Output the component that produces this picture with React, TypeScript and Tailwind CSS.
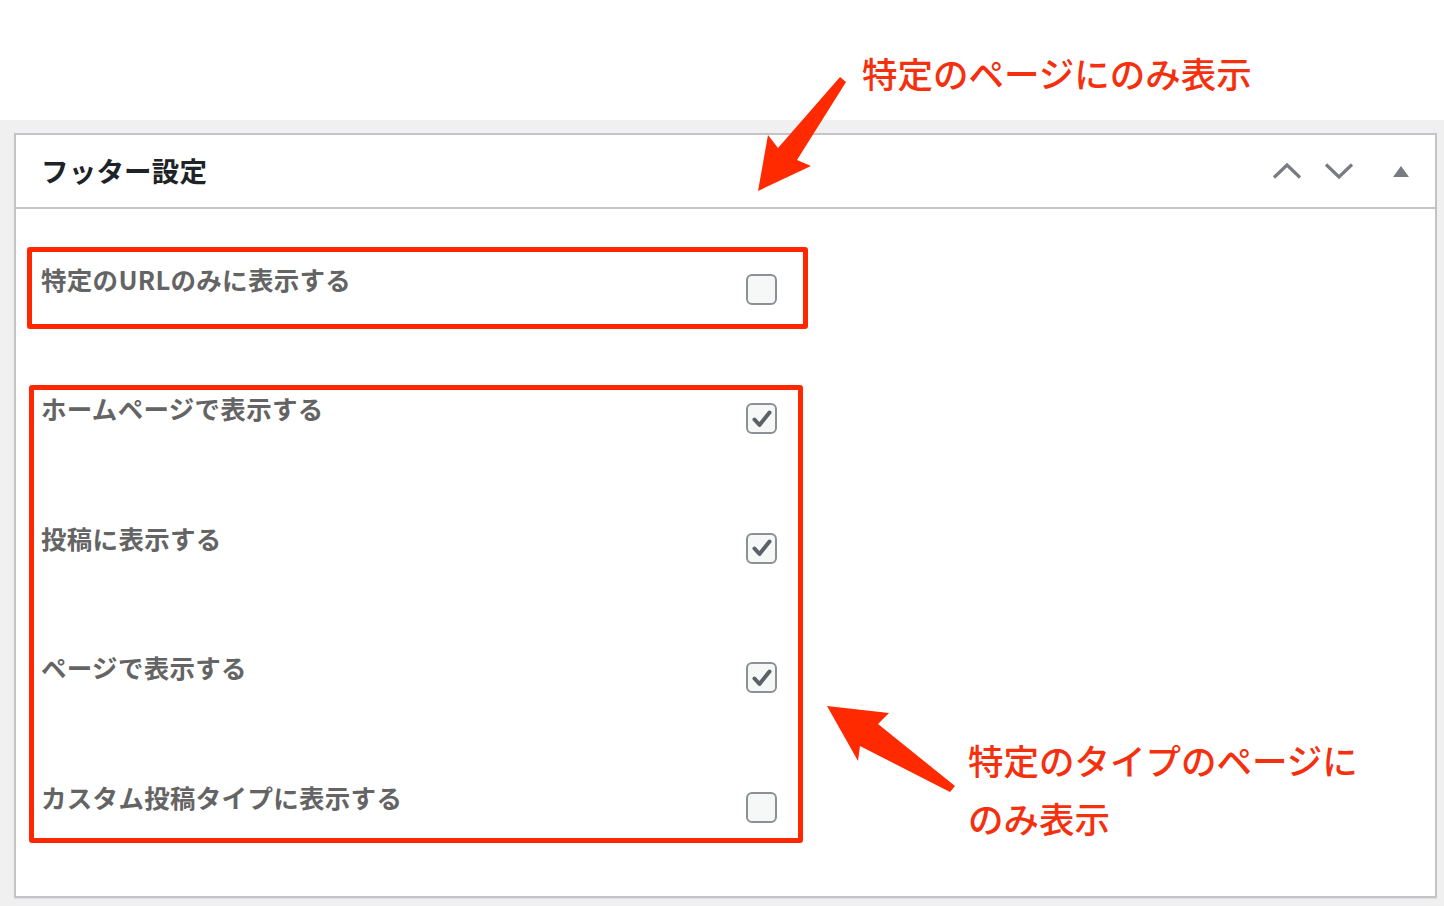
const rows = [
  { label: "特定のURLのみに表示する", checked: false },
  { label: "ホームページで表示する", checked: true },
  { label: "投稿に表示する", checked: true },
  { label: "ページで表示する", checked: true },
  { label: "カスタム投稿タイプに表示する", checked: false },
];

const Checkbox = ({ checked }: { checked: boolean }) => (
  <div className="mt-[13px] w-[31px] h-[31px] rounded-[6px] border-2 border-[#8c8f94] bg-[#f6f7f7] flex items-center justify-center shrink-0">
    {checked && (
      <svg width="24" height="24" viewBox="0 0 24 24">
        <path
          d="M4.5 12.5 L9.5 18 L19.5 5.5"
          fill="none"
          stroke="#5c6168"
          strokeWidth="4"
          strokeLinecap="round"
          strokeLinejoin="round"
        />
      </svg>
    )}
  </div>
);

const Chevron = ({ up }: { up: boolean }) => (
  <svg width="30" height="18" viewBox="0 0 30 18">
    <polyline
      points={up ? "2,15.5 15,3 28,15.5" : "2,2.5 15,15 28,2.5"}
      fill="none"
      stroke="#787c82"
      strokeWidth="3.2"
    />
  </svg>
);

const App = () => {
  return (
    <div
      className="relative w-[1444px] h-[906px] overflow-hidden bg-white"
      style={{ fontFamily: '"Noto Sans CJK JP", "Noto Sans", sans-serif' }}
    >
      <div className="h-[120px] bg-white" />
      <div className="bg-[#f0f0f1] h-[786px] pt-[13px] pl-[14px] pr-[7px]">
        <div className="bg-white border-2 border-[#c3c4c7] h-[765px] shadow-[0_1px_1px_rgba(0,0,0,0.06)]">
          <div className="h-[74px] border-b-2 border-[#c3c4c7] flex items-center pl-[25px] pr-[26px]">
            <h2 className="text-[27.5px] font-bold text-[#1d2327] tracking-[0.2px]">フッター設定</h2>
            <div className="ml-auto flex items-center">
              <Chevron up />
              <div className="ml-[22px]">
                <Chevron up={false} />
              </div>
              <svg className="ml-[39px]" width="16" height="11" viewBox="0 0 16 11">
                <path d="M8 0 L16 11 L0 11 Z" fill="#787c82" />
              </svg>
            </div>
          </div>
          <div className="pt-[52px] pl-[25px] flex flex-col gap-[81.4px]">
            {rows.map((r) => (
              <div key={r.label} className="flex items-start h-[48px]">
                <span className="w-[705px] text-[25.5px] leading-[36px] font-semibold text-[#646464] tracking-[0.3px]">
                  {r.label}
                </span>
                <Checkbox checked={r.checked} />
              </div>
            ))}
          </div>
        </div>
      </div>

      {/* annotation boxes */}
      <div className="absolute left-[27px] top-[247px] w-[781px] h-[82px] border-[5px] border-[#ff2600] rounded-[3px]" />
      <div className="absolute left-[29px] top-[385px] w-[774px] h-[458px] border-[5px] border-[#ff2600] rounded-[3px]" />

      {/* annotation texts */}
      <div className="absolute left-[862px] top-[52px] text-[35.5px] leading-[42px] font-medium text-[#f5300f]">
        特定のページにのみ表示
      </div>
      <div className="absolute left-[968px] top-[731px] text-[35.5px] leading-[58px] font-medium text-[#f5300f]">
        特定のタイプのページに
        <br />
        のみ表示
      </div>

      {/* arrows */}
      <svg className="absolute left-0 top-0 pointer-events-none" width="1444" height="906">
        <polygon
          points="758,191 768,135 778,148 840,77 846,82 797,160 811,166"
          fill="#ff2a00"
        />
        <polygon
          points="827,706 889,713 878,724 955,786 950,792 860,746 858,761"
          fill="#ff2a00"
        />
      </svg>
    </div>
  );
};

export default App;
